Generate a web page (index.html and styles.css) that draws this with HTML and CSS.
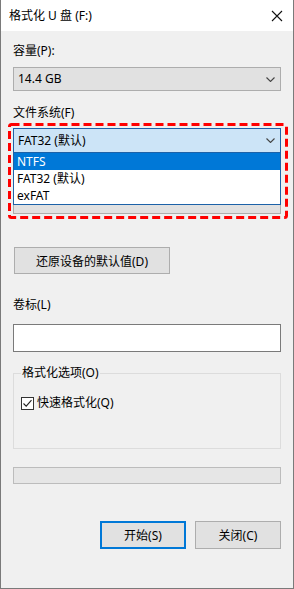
FILE: index.html
```html
<!DOCTYPE html>
<html lang="zh-CN">
<head>
    <meta charset="UTF-8">
    <meta name="viewport" content="width=device-width, initial-scale=1.0">
    <title>格式化 U 盘 (F:)</title>
    <link rel="stylesheet" href="styles.css">
</head>
<body>
    <div class="window">
        <div class="titlebar">
            <span class="title">格式化 U 盘 (F:)</span>
            <svg class="close" width="12" height="12" viewBox="0 0 12 12">
                <path d="M1 1 L11 11 M11 1 L1 11" stroke="#111" stroke-width="1.1" fill="none"/>
            </svg>
        </div>

        <div class="content">
            <div class="label first">容量(P):</div>
            <div class="combo">
                <span>14.4 GB</span>
                <svg class="chevron" width="9" height="5" viewBox="0 0 9 5">
                    <path d="M0.5 0.5 L4.5 4.5 L8.5 0.5" stroke="#444" stroke-width="1.1" fill="none"/>
                </svg>
            </div>

            <div class="label second">文件系统(F)</div>
            <div class="fs-area">
                <div class="combo open">
                    <span>FAT32 (默认)</span>
                    <svg class="chevron" width="9" height="5" viewBox="0 0 9 5">
                        <path d="M0.5 0.5 L4.5 4.5 L8.5 0.5" stroke="#444" stroke-width="1.1" fill="none"/>
                    </svg>
                </div>
                <!-- next combo, covered by the open list -->
                <div class="combo hidden-combo"></div>

                <div class="droplist">
                    <div class="option selected">NTFS</div>
                    <div class="option">FAT32 (默认)</div>
                    <div class="option">exFAT</div>
                </div>

                <svg class="highlight" width="280" height="96" viewBox="0 0 280 96">
                    <rect x="1.5" y="1.5" width="277" height="93" rx="2" fill="none"
                          stroke="#ff0000" stroke-width="3" stroke-dasharray="8 4"/>
                </svg>
            </div>

            <button class="btn restore">还原设备的默认值(D)</button>

            <div class="label third">卷标(L)</div>
            <div class="textbox"></div>

            <fieldset class="options">
                <legend>格式化选项(O)</legend>
                <label class="check-row">
                    <span class="checkbox">
                        <svg width="11" height="11" viewBox="0 0 11 11">
                            <path d="M1.5 5.5 L4.2 8.2 L9.5 2.2" stroke="#222" stroke-width="1.1" fill="none"/>
                        </svg>
                    </span>
                    快速格式化(Q)
                </label>
            </fieldset>

            <div class="progress"></div>

            <div class="actions">
                <button class="btn primary">开始(S)</button>
                <button class="btn">关闭(C)</button>
            </div>
        </div>
    </div>
</body>
</html>
```

FILE: styles.css
```css
body {
    margin: 0;
    padding: 0;
    font-family: "Noto Sans", "Noto Sans CJK SC", sans-serif;
    font-size: 12px;
    color: #000;
    background-color: #ffffff;
}

.window {
    width: 294px;
    height: 589px;
    box-sizing: border-box;
    border: 1px solid #7a7a7a;
    border-top: none;
    background-color: #f0f0f0;
}

.titlebar {
    height: 31px;
    background-color: #ffffff;
    display: flex;
    align-items: center;
    justify-content: space-between;
    padding: 0 10px 0 8px;
}

.title {
    font-size: 12px;
    line-height: 16px;
}

.close {
    margin-top: 1px;
}

.content {
    padding: 0 12px;
}

.label {
    line-height: 16px;
}

.label.first {
    padding-top: 12px;
}

.label.second {
    margin-top: 14px;
}

.label.third {
    margin-top: 23px;
}

.combo {
    height: 24px;
    box-sizing: border-box;
    border: 1px solid #adadad;
    background-color: #e1e1e1;
    display: flex;
    align-items: center;
    justify-content: space-between;
    padding: 0 5px 0 4px;
    margin-top: 8px;
    line-height: 16px;
}

.fs-area {
    position: relative;
    margin-top: 7px;
}

.fs-area .combo.open {
    height: 25px;
    margin-top: 0;
    border-color: #1d62a8;
    background-color: #cce4f7;
}

.fs-area .hidden-combo {
    margin-top: 37px;
}

.droplist {
    position: absolute;
    left: 0;
    right: 0;
    top: 25px;
    height: 52px;
    box-sizing: border-box;
    background-color: #ffffff;
    border: 1px solid #1d62a8;
    border-top: none;
}

.option {
    height: 17px;
    line-height: 17px;
    padding-left: 3px;
}

.option.selected {
    background-color: #0078d7;
    color: #ffffff;
}

.highlight {
    position: absolute;
    left: -5px;
    top: -5px;
}

.btn {
    font-family: inherit;
    font-size: 12px;
    color: #000;
    background-color: #e1e1e1;
    border: 1px solid #adadad;
    height: 28px;
    width: 86px;
    padding: 0;
    box-sizing: border-box;
}

.btn.restore {
    display: block;
    width: 156px;
    height: 27px;
    margin: 33px 0 0 1px;
}

.btn.primary {
    border: 2px solid #0078d7;
}

.textbox {
    height: 28px;
    box-sizing: border-box;
    border: 1px solid #7a7a7a;
    background-color: #ffffff;
    margin-top: 11px;
}

.options {
    margin: 13px 0 0 0;
    padding: 0 7px 37px;
    border: 1px solid #dcdcdc;
    min-width: 0;
}

.options legend {
    padding: 0 1px;
    line-height: 16px;
}

.check-row {
    display: flex;
    align-items: center;
    gap: 3px;
    line-height: 16px;
    margin-top: 14px;
}

.checkbox {
    width: 13px;
    height: 13px;
    box-sizing: border-box;
    border: 1px solid #333;
    background-color: #ffffff;
    display: flex;
    align-items: center;
    justify-content: center;
}

.progress {
    height: 17px;
    box-sizing: border-box;
    border: 1px solid #bcbcbc;
    background-color: #e6e6e6;
    margin-top: 18px;
}

.actions {
    display: flex;
    justify-content: flex-end;
    gap: 9px;
    margin-top: 37px;
}
```
